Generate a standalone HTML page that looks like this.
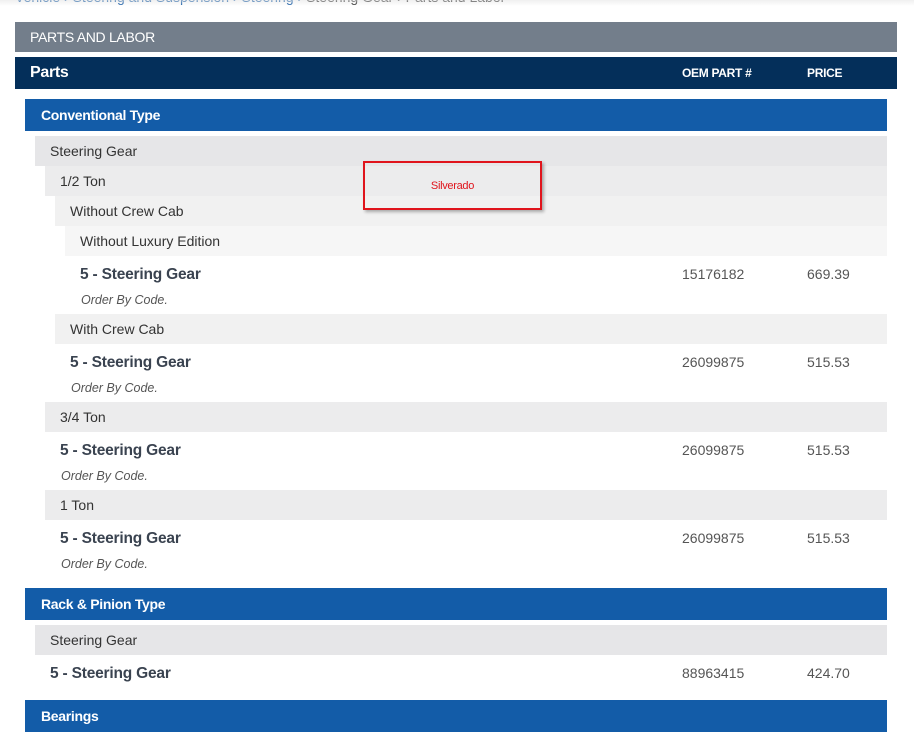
<!DOCTYPE html>
<html><head><style>
body{margin:0;width:914px;height:720px;overflow:hidden;background:#fff;font-family:"Liberation Sans",Arial,sans-serif;position:relative}
div{position:absolute;box-sizing:border-box}
.bar{color:#fff;font-size:14px;line-height:30px;letter-spacing:-0.3px}
.row{right:27px;height:30px;line-height:30px;font-size:14px;color:#333}
.t{font-size:15.5px;color:#3a4350;font-weight:bold;letter-spacing:-0.2px}
.s{font-size:12.5px;font-style:italic;color:#555}
.n{font-size:14px;color:#555}
</style></head><body>
<div style="left:15px;top:-11px;font-size:14px;color:#1a5fa8;white-space:nowrap">Vehicle › Steering and Suspension › Steering › <span style="color:#333">Steering Gear › Parts and Labor</span></div>
<div style="left:0;top:0;width:914px;height:6px;background:linear-gradient(rgba(230,230,230,.6),rgba(255,255,255,0))"></div>
<div class="bar" style="left:15px;top:22px;width:882px;height:30px;background:#737e8b;padding-left:15px">PARTS AND LABOR</div>
<div class="bar" style="left:15px;top:57px;width:882px;height:32px;background:#042f5a;line-height:32px;padding-left:15px;font-size:16px;font-weight:bold">Parts
<span style="position:absolute;left:667px;font-size:12px">OEM PART #</span><span style="position:absolute;left:792px;font-size:12px">PRICE</span></div>
<div class="bar" style="left:25px;top:99px;width:862px;height:32px;line-height:32px;background:#135ca8;padding-left:16px;font-weight:bold">Conventional Type</div>

<div class="row" style="left:35px;top:136px;background:#e6e6e8;padding-left:15px">Steering Gear</div>
<div class="row" style="left:45px;top:166px;background:#ececed;padding-left:15px">1/2 Ton</div>
<div class="row" style="left:55px;top:196px;background:#f1f1f1;padding-left:15px">Without Crew Cab</div>
<div class="row" style="left:65px;top:226px;background:#f6f6f6;padding-left:15px">Without Luxury Edition</div>
<div class="t" style="left:80px;top:266px">5 - Steering Gear</div><div class="s" style="left:81px;top:293px">Order By Code.</div>
<div class="n" style="left:682px;top:266px">15176182</div><div class="n" style="left:807px;top:266px">669.39</div>

<div class="row" style="left:55px;top:314px;background:#f1f1f1;padding-left:15px">With Crew Cab</div>
<div class="t" style="left:70px;top:354px">5 - Steering Gear</div><div class="s" style="left:71px;top:381px">Order By Code.</div>
<div class="n" style="left:682px;top:354px">26099875</div><div class="n" style="left:807px;top:354px">515.53</div>

<div class="row" style="left:45px;top:402px;background:#ececed;padding-left:15px">3/4 Ton</div>
<div class="t" style="left:60px;top:442px">5 - Steering Gear</div><div class="s" style="left:61px;top:469px">Order By Code.</div>
<div class="n" style="left:682px;top:442px">26099875</div><div class="n" style="left:807px;top:442px">515.53</div>

<div class="row" style="left:45px;top:490px;background:#ececed;padding-left:15px">1 Ton</div>
<div class="t" style="left:60px;top:530px">5 - Steering Gear</div><div class="s" style="left:61px;top:557px">Order By Code.</div>
<div class="n" style="left:682px;top:530px">26099875</div><div class="n" style="left:807px;top:530px">515.53</div>

<div class="bar" style="left:25px;top:588px;width:862px;height:32px;line-height:32px;background:#135ca8;padding-left:16px;font-weight:bold">Rack &amp; Pinion Type</div>
<div class="row" style="left:35px;top:625px;background:#e6e6e8;padding-left:15px">Steering Gear</div>
<div class="t" style="left:50px;top:665px">5 - Steering Gear</div>
<div class="n" style="left:682px;top:665px">88963415</div><div class="n" style="left:807px;top:665px">424.70</div>
<div class="bar" style="left:25px;top:700px;width:862px;height:32px;line-height:32px;background:#135ca8;padding-left:16px;font-weight:bold">Bearings</div>

<div style="left:363px;top:161px;width:179px;height:49px;border:2px solid #e0141c;box-shadow:2px 2px 3px rgba(0,0,0,.3);text-align:center;line-height:47px;color:#e0141c;font-size:11px;letter-spacing:-0.3px">Silverado</div>
</body></html>
